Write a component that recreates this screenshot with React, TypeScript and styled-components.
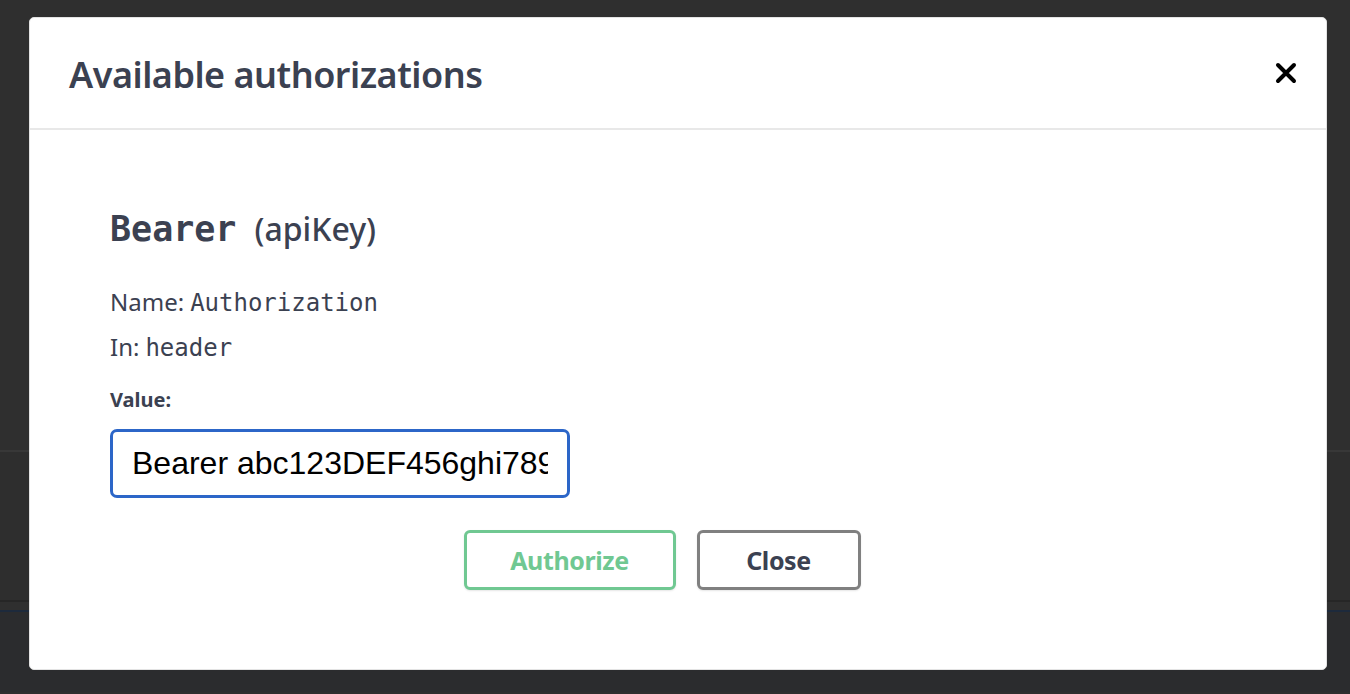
import React from "react";
import styled, { createGlobalStyle } from "styled-components";

const GlobalStyle = createGlobalStyle`
  html, body {
    margin: 0;
    padding: 0;
    width: 100%;
    height: 100%;
    overflow: hidden;
    background: #2e2e2e;
  }
  * { box-sizing: border-box; }
`;

const Screen = styled.div`
  position: relative;
  width: 1350px;
  height: 694px;
  overflow: hidden;
`;

// the page under the dimmed backdrop
const Page = styled.div`
  display: flex;
  flex-direction: column;
  height: 100%;
`;

const PageBand = styled.div<{ $h: number; $bg: string; $line?: string }>`
  height: ${(p) => p.$h}px;
  background: ${(p) => p.$bg};
  border-bottom: ${(p) => (p.$line ? `2px solid ${p.$line}` : "none")};
  flex-shrink: 0;
`;

const Overlay = styled.div`
  position: absolute;
  inset: 0;
  padding: 17px 0 0 29px;
`;

const Modal = styled.div`
  width: 1298px;
  height: 653px;
  background: #fff;
  border: 1px solid #e3e3e3;
  border-radius: 5px;
  display: flex;
  flex-direction: column;
  font-family: "Noto Sans", "Open Sans", sans-serif;
  color: #3b4151;
`;

const Header = styled.div`
  height: 112px;
  border-bottom: 2px solid #e8e8e8;
  display: flex;
  align-items: center;
  justify-content: space-between;
  padding: 0 28px 0 39px;
`;

const Title = styled.h3`
  margin: 0;
  font-size: 36px;
  font-weight: 600;
  letter-spacing: -0.5px;
  color: #3b4151;
  padding-top: 2px;
`;

const CloseIcon = styled.button`
  border: none;
  background: none;
  padding: 0;
  width: 24px;
  height: 24px;
  display: flex;
  align-items: center;
  justify-content: center;
  cursor: pointer;
`;

const Body = styled.div`
  padding: 77px 112px 0 80px;
  display: flex;
  flex-direction: column;
`;

const SchemeTitle = styled.h4`
  margin: 0 0 36px;
  font-size: 32px;
  font-weight: 500;
  color: #3b4151;
  display: flex;
  align-items: baseline;
  gap: 18px;
`;

const Mono = styled.code<{ $size: number; $bold?: boolean }>`
  font-family: "DejaVu Sans Mono", "Liberation Mono", monospace;
  font-size: ${(p) => p.$size}px;
  font-weight: ${(p) => (p.$bold ? 700 : 400)};
  color: #3b4151;
`;

const InfoLine = styled.p`
  margin: 0 0 12px;
  font-size: 24px;
  line-height: 32px;
  color: #3b4151;
  display: flex;
  align-items: baseline;
  gap: 6px;
`;

const Label = styled.label`
  margin: 10px 0 16px;
  font-size: 20px;
  font-weight: 700;
  color: #3b4151;
`;

const ValueInput = styled.input`
  width: 460px;
  height: 69px;
  border: 3px solid #2c66c8;
  border-radius: 7px;
  padding: 0 19px;
  font-family: "Liberation Sans", Arial, sans-serif;
  font-size: 32px;
  color: #000;
  outline: none;
  background: #fff;
`;

const ButtonRow = styled.div`
  margin-top: 32px;
  display: flex;
  justify-content: center;
  gap: 21px;
`;

const ActionButton = styled.button<{ $tone: "green" | "gray"; $w: number }>`
  width: ${(p) => p.$w}px;
  height: 60px;
  background: #fff;
  border: 3px solid ${(p) => (p.$tone === "green" ? "#70c892" : "#808080")};
  color: ${(p) => (p.$tone === "green" ? "#70c892" : "#3b4151")};
  border-radius: 6px;
  font-family: "Noto Sans", "Open Sans", sans-serif;
  font-size: 25px;
  font-weight: 700;
  letter-spacing: -0.4px;
  box-shadow: 0 1px 2px rgba(0, 0, 0, 0.1);
  cursor: pointer;
`;

export default function App() {
  return (
    <Screen>
      <GlobalStyle />
      <Page>
        <PageBand $h={452} $bg="#2f2f2f" $line="#383838" />
        <PageBand $h={150} $bg="#2e2e2e" $line="#262626" />
        <PageBand $h={10} $bg="#2f2f2f" $line="#1d2a3c" />
        <PageBand $h={80} $bg="#2b2c2e" />
      </Page>
      <Overlay>
        <Modal>
          <Header>
            <Title>Available authorizations</Title>
            <CloseIcon aria-label="Close">
              <svg width="22" height="22" viewBox="0 0 22 22">
                <path
                  d="M3 3 L19 19 M19 3 L3 19"
                  stroke="#000"
                  strokeWidth="4"
                  strokeLinecap="round"
                />
              </svg>
            </CloseIcon>
          </Header>
          <Body>
            <SchemeTitle>
              <Mono $size={35} $bold>
                Bearer
              </Mono>
              <span>(apiKey)</span>
            </SchemeTitle>
            <InfoLine>
              Name: <Mono $size={24}>Authorization</Mono>
            </InfoLine>
            <InfoLine>
              In: <Mono $size={24}>header</Mono>
            </InfoLine>
            <Label>Value:</Label>
            <ValueInput
              type="text"
              defaultValue="Bearer abc123DEF456ghi789jkl012MNO345"
            />
            <ButtonRow>
              <ActionButton $tone="green" $w={212}>
                Authorize
              </ActionButton>
              <ActionButton $tone="gray" $w={164}>
                Close
              </ActionButton>
            </ButtonRow>
          </Body>
        </Modal>
      </Overlay>
    </Screen>
  );
}
